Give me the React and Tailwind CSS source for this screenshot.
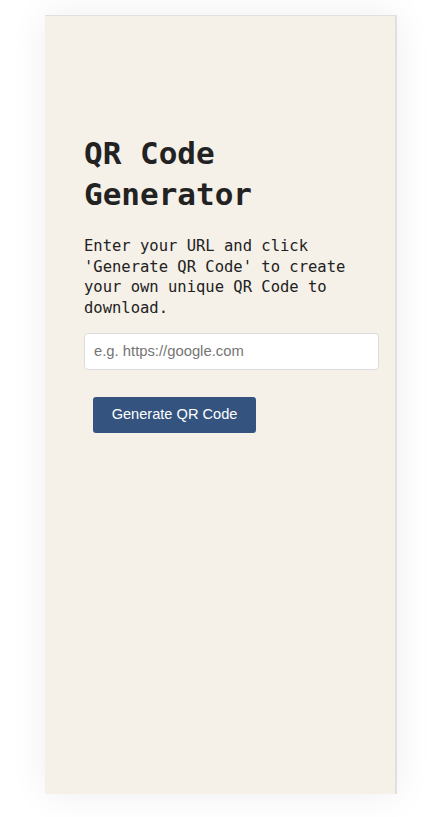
export default function App() {
  return (
    <div className="w-full min-h-[817px] bg-white pt-[15px] pl-[45px]">
      <div className="w-[352px] h-[779px] bg-[#f5f0e8] border-t border-r-2 border-[#e2e0dc] shadow-[0_0_35px_rgba(0,0,0,0.07)] pl-[39px] pt-[117px]">
        <h1 className="font-['DejaVu_Sans_Mono',monospace] font-bold text-[31px] leading-[41px] text-[#222] w-[260px]">
          QR Code Generator
        </h1>
        <p className="mt-[21px] font-['DejaVu_Sans_Mono',monospace] text-[15.5px] leading-[20.7px] text-[#222] w-[270px]">
          Enter your URL and click 'Generate QR Code' to create your own unique QR Code to download.
        </p>
        <input
          type="text"
          placeholder="e.g. https://google.com"
          className="mt-[14px] block w-[295px] h-[37px] bg-white border border-[#ddd] rounded-[4px] px-[9px] font-['Liberation_Sans',Arial,sans-serif] text-[14.8px] text-[#222] placeholder:text-[#757575] outline-none"
        />
        <button className="mt-[27px] ml-[9px] block w-[163px] h-[36px] bg-[#34547f] rounded-[3px] text-white font-['Liberation_Sans',Arial,sans-serif] text-[14.6px]">
          Generate QR Code
        </button>
      </div>
    </div>
  );
}
